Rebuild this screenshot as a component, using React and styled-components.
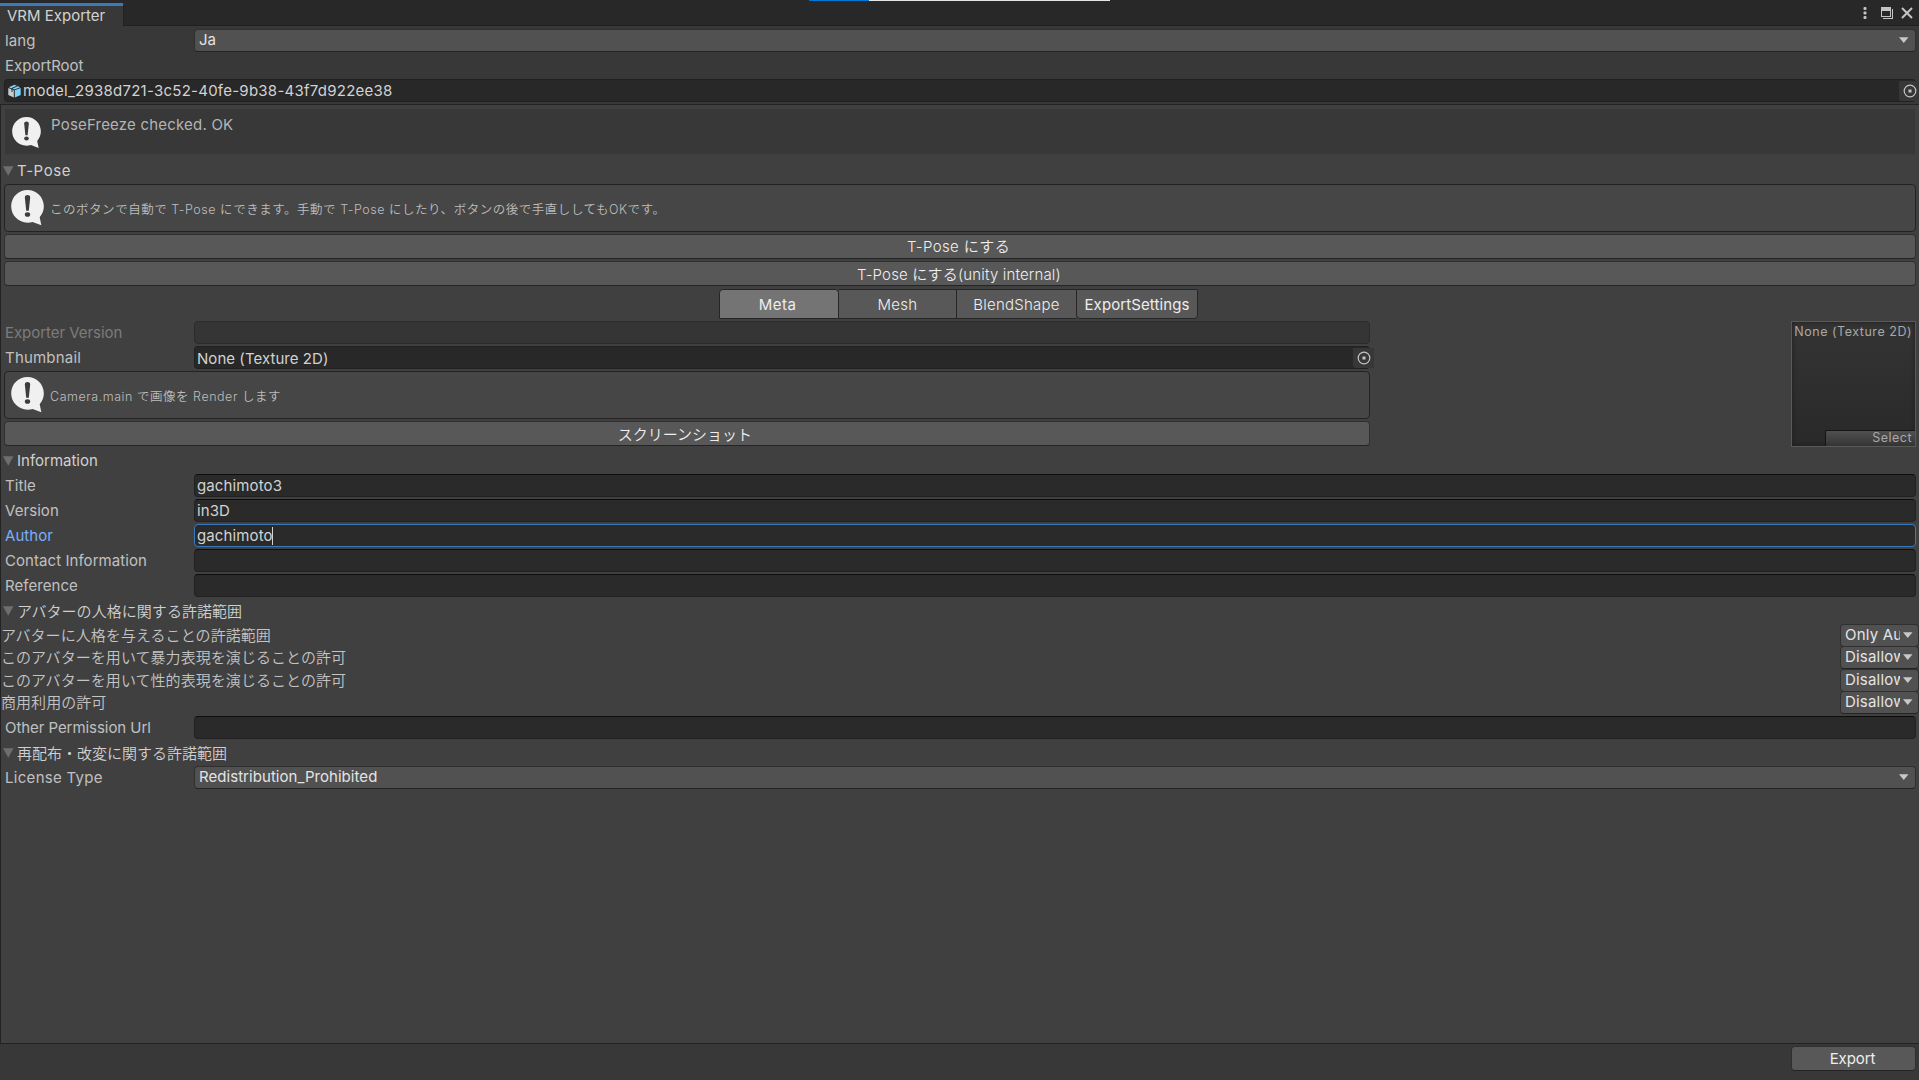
import React, { useState } from "react";
import styled, { createGlobalStyle } from "styled-components";

const GlobalStyle = createGlobalStyle`
  * {
    box-sizing: border-box;
  }
  body {
    margin: 0;
    background: #383838;
    overflow: hidden;
  }
`;

const Window = styled.div`
  display: flex;
  flex-direction: column;
  width: 1919px;
  height: 1080px;
  background: #383838;
  color: #c4c4c4;
  font-family: Inter, "Noto Sans CJK JP", sans-serif;
  font-size: 15px;
  white-space: pre;
`;
const TitleBar = styled.div`
  position: relative;
  display: flex;
  justify-content: space-between;
  align-items: flex-end;
  height: 26px;
  flex: none;
  background: #282828;
  border-bottom: 1px solid #202020;
`;
const Tab = styled.div`
  width: 124px;
  height: 23px;
  margin-bottom: -1px;
  padding-left: 7px;
  border-top: 3px solid #3a79bb;
  border-right: 1px solid #222222;
  border-radius: 0 2px 0 0;
  background: #383838;
  color: #d2d2d2;
  line-height: 20px;
`;
const WindowControls = styled.div`
  display: flex;
  height: 25px;
`;
const LoadingStrip = styled.div`
  position: absolute;
  top: 0;
  left: 809px;
  width: 301px;
  height: 1px;
  background: #e6e6e6;
`;
const LoadingBar = styled.div`
  width: 60px;
  height: 1px;
  background: #0078d7;
`;
const TopPanel = styled.div`
  display: flex;
  flex-direction: column;
  height: 78px;
  flex: none;
  padding: 3px 3px 0 4px;
`;
const MainPanel = styled.div`
  display: flex;
  flex-direction: column;
  flex: 1;
  padding: 4px 3px 0 3px;
  border: 1px solid #232323;
  border-right: none;
  background: #404040;
`;
const Footer = styled.div`
  display: flex;
  justify-content: flex-end;
  height: 36px;
  flex: none;
  padding: 2px 3px 0 0;
`;
const Row = styled.div`
  display: flex;
  height: 23px;
  flex: none;
  margin-bottom: 2px;
`;
const Label = styled.div`
  width: 190px;
  padding-left: 1px;
  flex: none;
  line-height: 23px;
  letter-spacing: ${(props) => props.$spacing || 0}px;
  color: ${(props) =>
    props.$focused ? "#7baefa" : props.$disabled ? "#7c7c7c" : "#c0c0c0"};
`;
const TextField = styled.div`
  display: flex;
  align-items: center;
  flex: 1;
  padding-left: 2px;
  border: 1px solid #212121;
  border-top-color: #0d0d0d;
  border-radius: 4px;
  background: #2a2a2a;
  color: #d2d2d2;
  line-height: 21px;
  letter-spacing: 0.12px;
  ${(props) => props.$focused && "border-color: #3a79bb;"}
  ${(props) =>
    props.$disabled && "border-color: #2b2b2b; background: #353535;"}
`;
const Caret = styled.span`
  width: 1px;
  height: 18px;
  margin-left: -1px;
  background: #d2d2d2;
`;
const ObjectField = styled(TextField)`
  border-top-color: #202020;
  background: #282828;
`;
const ObjectName = styled.span`
  flex: 1;
  padding-top: ${(props) => props.$drop || 0}px;
  letter-spacing: ${(props) => props.$spacing || 0}px;
`;
const Picker = styled.span`
  display: flex;
  align-items: center;
  justify-content: center;
  width: 21px;
  height: 20px;
  margin-right: -5px;
  border-radius: 0 0 0 3px;
  background: #373737;
`;
const Dropdown = styled.div`
  display: flex;
  align-items: center;
  flex: 1;
  height: 23px;
  padding: 0 6px 1px 4px;
  border: 1px solid #303030;
  border-bottom-color: #242424;
  border-radius: 4px;
  background: #515151;
  color: #e4e4e4;
  line-height: 20px;
  letter-spacing: 0.05px;
`;
const SmallDropdown = styled(Dropdown)`
  flex: none;
  width: 79px;
  padding-right: 5px;
  letter-spacing: 0.2px;
`;
const DropdownText = styled.span`
  flex: 1;
  margin-right: 3px;
  overflow: hidden;
`;
const Message = styled.div`
  display: flex;
  height: 45px;
  flex: none;
  margin: 0 1px 4px;
  padding: 8px 0 0 7px;
  background: #383838;
  color: #b4b4b4;
`;
const MessageText = styled.div`
  margin: -1px 0 0 10px;
  line-height: 18px;
  letter-spacing: 0.2px;
`;
const HelpBox = styled.div`
  display: flex;
  align-items: center;
  height: 48px;
  flex: none;
  margin-bottom: 2px;
  padding-left: 6px;
  border: 1px solid #232323;
  border-radius: 4px;
  background: #464646;
  color: #bdbdbd;
  font-size: 12.5px;
`;
const HelpText = styled.div`
  margin-left: 6px;
  font-weight: 350;
  letter-spacing: 0.53px;
`;
const Foldout = styled.div`
  display: flex;
  align-items: center;
  height: 23px;
  flex: none;
  margin: ${(props) => props.$margin || "0 0 2px"};
  color: #d0d0d0;
`;
const FoldoutText = styled.span`
  margin-left: 4px;
  letter-spacing: ${(props) => props.$spacing || 0}px;
  font-weight: ${(props) => (props.$light ? 350 : 400)};
`;
const Button = styled.div`
  height: 25px;
  width: ${(props) => props.$width || "auto"};
  flex: none;
  margin-bottom: 2px;
  padding-right: ${(props) => props.$shift || 2}px;
  border: 1px solid #303030;
  border-bottom-color: #242424;
  border-radius: 4px;
  background: #585858;
  color: #eeeeee;
  text-align: center;
  font-weight: ${(props) => (props.$light ? 350 : 400)};
  line-height: ${(props) => props.$line || 23}px;
  letter-spacing: ${(props) => props.$spacing || 0}px;
`;
const Toolbar = styled.div`
  display: flex;
  height: 30px;
  flex: none;
  margin: 1px 0 2px 715px;
`;
const ToolbarButton = styled.div`
  width: ${(props) => props.$width}px;
  padding-right: ${(props) => props.$shift || 0}px;
  border: 1px solid #262626;
  border-width: ${(props) => props.$borders || "1px"};
  border-radius: ${(props) => props.$radius || 0};
  background: ${(props) => (props.$active ? "#747474" : "#585858")};
  color: #eeeeee;
  text-align: center;
  line-height: 29px;
  font-weight: ${(props) => (props.$light ? 300 : 400)};
  letter-spacing: ${(props) => props.$spacing || 0}px;
`;
const MetaSection = styled.div`
  display: flex;
  justify-content: space-between;
  height: 125px;
  flex: none;
  margin-bottom: 3px;
`;
const MetaFields = styled.div`
  display: flex;
  flex-direction: column;
  width: 1366px;
`;
const Preview = styled.div`
  display: flex;
  flex-direction: column;
  justify-content: space-between;
  align-items: flex-end;
  width: 125px;
  height: 126px;
  border: 1px solid #5a5a5a;
  background: linear-gradient(#343434, #292929);
  box-shadow: inset 0 0 4px #1c1c1c;
  color: #a8a8a8;
  font-size: 12.5px;
`;
const PreviewText = styled.div`
  padding: 2px 3px 0 0;
  letter-spacing: 0.52px;
`;
const PreviewSelect = styled.div`
  width: 90px;
  height: 16px;
  padding-right: 3px;
  border-top: 1px solid #151515;
  border-left: 1px solid #151515;
  border-radius: 2px 0 0 0;
  background: linear-gradient(#505050, #343434);
  line-height: 14px;
  text-align: right;
  letter-spacing: 0.5px;
`;
const PermissionList = styled.div`
  display: flex;
  flex-direction: column;
  height: 92px;
  flex: none;
  margin: 0 -3px;
`;
const Permission = styled.div`
  display: flex;
  justify-content: space-between;
  height: 22px;
  line-height: 23px;
  &:nth-child(2) {
    height: 23px;
  }
`;
const PermissionLabel = styled.span`
  font-weight: 350;
  letter-spacing: 0.06px;
`;

const Arrow = () => (
  <svg width="10" height="6" viewBox="0 0 10 6">
    <path d="M0 0.3h9.5L4.75 6z" fill="#c8c8c8" />
  </svg>
);

const FoldIcon = styled.svg`
  margin: 0 -1px 0 -1px;
`;
const FoldArrow = () => (
  <FoldIcon width="11" height="10" viewBox="0 0 11 10">
    <path d="M0 0.3h10.5L5.25 9.8z" fill="#6e6e6e" />
  </FoldIcon>
);

const Target = () => (
  <svg width="14" height="14" viewBox="0 0 14 14">
    <circle cx="7" cy="7" r="5.8" fill="none" stroke="#c4c4c4" strokeWidth="1.2" />
    <rect x="5.5" y="5.5" width="3" height="3" fill="#c4c4c4" />
  </svg>
);

const PrefabIcon = styled.svg`
  flex: none;
  margin: 0 2px 0 1px;
`;
const Prefab = () => (
  <PrefabIcon width="13" height="14" viewBox="0 0 13 14">
    <path d="M0.3 4L5.8 6.2V13.4L0.3 11z" fill="#c9cdd0" />
    <path d="M6.8 6.2L12.7 4V11L6.8 13.4z" fill="#7fd3fa" />
    <path d="M0.8 3.2L6.5 0.8L12.2 3.2L6.5 5.4z" fill="#7fd3fa" />
    <path d="M9.6 1.8L4 4.4V8" fill="none" stroke="#282828" />
  </PrefabIcon>
);

const Bubble = ({ size }) => (
  <svg width={size} height={size * 1.08} viewBox="0 0 33 36">
    <path
      d="M16.5 0C25.6 0 33 7.2 33 16.5c0 4.5-1.6 8-4.2 11L30.5 35.6L21.6 32.3C20 32.8 18.3 33 16.5 33C7.4 33 0 25.8 0 16.5S7.4 0 16.5 0z"
      fill="#f0f0f0"
    />
    <path d="M13.8 7.5C13.8 4.4 19.2 4.4 19.2 7.5L17.8 21H15.2z" fill="#3c3c3c" />
    <ellipse cx="16.5" cy="24.7" rx="2.7" ry="2.3" fill="#3c3c3c" />
  </svg>
);

const permissions = [
  { label: "アバターに人格を与えることの許諾範囲", value: "Only Au" },
  { label: "このアバターを用いて暴力表現を演じることの許可", value: "Disallow" },
  { label: "このアバターを用いて性的表現を演じることの許可", value: "Disallow" },
  { label: "商用利用の許可", value: "Disallow" },
];

const information = [
  { label: "Title", value: "gachimoto3" },
  { label: "Version", value: "in3D" },
  { label: "Author", value: "gachimoto" },
  { label: "Contact Information", value: "" },
  { label: "Reference", value: "" },
];

function App() {
  const [focused] = useState("Author");

  return (
    <Window>
      <GlobalStyle />
      <TitleBar>
        <Tab>VRM Exporter</Tab>
        <LoadingStrip>
          <LoadingBar />
        </LoadingStrip>
        <WindowControls>
          <svg width="58" height="25" viewBox="0 0 58 25">
            <g fill="#c4c4c4">
              <rect x="2.5" y="7" width="3" height="3" rx="1" />
              <rect x="2.5" y="11.5" width="3" height="3" rx="1" />
              <rect x="2.5" y="16" width="3" height="3" rx="1" />
              <path d="M20 7h10v10H20zM21 11v5h8v-5zM31 9h1v10H22v-1h9z" fillRule="evenodd" />
            </g>
            <path d="M41 8l10 10M51 8l-10 10" stroke="#c4c4c4" strokeWidth="2" />
          </svg>
        </WindowControls>
      </TitleBar>
      <TopPanel>
        <Row>
          <Label $spacing={0.1}>lang</Label>
          <Dropdown>
            <DropdownText>Ja</DropdownText>
            <Arrow />
          </Dropdown>
        </Row>
        <Row>
          <Label>ExportRoot</Label>
        </Row>
        <Row>
          <ObjectField>
            <Prefab />
            <ObjectName $spacing={0.25}>
              model_2938d721-3c52-40fe-9b38-43f7d922ee38
            </ObjectName>
            <Picker>
              <Target />
            </Picker>
          </ObjectField>
        </Row>
      </TopPanel>
      <MainPanel>
        <Message>
          <Bubble size={29} />
          <MessageText>PoseFreeze checked. OK</MessageText>
        </Message>
        <Foldout $margin="1px 0 2px">
          <FoldArrow />
          <FoldoutText $spacing={0.55}>T-Pose</FoldoutText>
        </Foldout>
        <HelpBox>
          <Bubble size={33} />
          <HelpText>
            このボタンで自動で T-Pose にできます。手動で T-Pose にしたり、ボタンの後で手直ししてもOKです。
          </HelpText>
        </HelpBox>
        <Button $light $spacing={0.38} $shift={3}>T-Pose にする</Button>
        <Button $light $spacing={0.16} $line={25}>T-Pose にする(unity internal)</Button>
        <Toolbar>
          <ToolbarButton $active $width={120} $shift={3} $radius="4px 4px 0 0" $spacing={0.5}>
            Meta
          </ToolbarButton>
          <ToolbarButton $light $width={118} $borders="1px 1px 1px 0" $spacing={0.3}>
            Mesh
          </ToolbarButton>
          <ToolbarButton $light $width={119} $borders="1px 0" $spacing={0.25}>
            BlendShape
          </ToolbarButton>
          <ToolbarButton $width={122} $radius="0 0 4px 4px" $spacing={0.1}>
            ExportSettings
          </ToolbarButton>
        </Toolbar>
        <MetaSection>
          <MetaFields>
            <Row>
              <Label $disabled $spacing={-0.05}>Exporter Version</Label>
              <TextField $disabled />
            </Row>
            <Row>
              <Label $spacing={0.2}>Thumbnail</Label>
              <ObjectField>
                <ObjectName $spacing={0.05} $drop={2}>None (Texture 2D)</ObjectName>
                <Picker>
                  <Target />
                </Picker>
              </ObjectField>
            </Row>
            <HelpBox>
              <Bubble size={33} />
              <HelpText>Camera.main で画像を Render します</HelpText>
            </HelpBox>
            <Button $light $shift={4} $line={25}>スクリーンショット</Button>
          </MetaFields>
          <Preview>
            <PreviewText>None (Texture 2D)</PreviewText>
            <PreviewSelect>Select</PreviewSelect>
          </Preview>
        </MetaSection>
        <Foldout>
          <FoldArrow />
          <FoldoutText>Information</FoldoutText>
        </Foldout>
        {information.map((item) => (
          <Row key={item.label}>
            <Label $focused={item.label === focused} $spacing={0.06}>
              {item.label}
            </Label>
            <TextField $focused={item.label === focused}>
              {item.value}
              {item.label === focused && <Caret />}
            </TextField>
          </Row>
        ))}
        <Foldout>
          <FoldArrow />
          <FoldoutText $light $spacing={0.05}>アバターの人格に関する許諾範囲</FoldoutText>
        </Foldout>
        <PermissionList>
          {permissions.map((item) => (
            <Permission key={item.label}>
              <PermissionLabel>{item.label}</PermissionLabel>
              <SmallDropdown>
                <DropdownText>{item.value}</DropdownText>
                <Arrow />
              </SmallDropdown>
            </Permission>
          ))}
        </PermissionList>
        <Row>
          <Label $spacing={-0.06}>Other Permission Url</Label>
          <TextField />
        </Row>
        <Foldout>
          <FoldArrow />
          <FoldoutText $light>再配布・改変に関する許諾範囲</FoldoutText>
        </Foldout>
        <Row>
          <Label $spacing={0.3}>License Type</Label>
          <Dropdown>
            <DropdownText>Redistribution_Prohibited</DropdownText>
            <Arrow />
          </Dropdown>
        </Row>
      </MainPanel>
      <Footer>
        <Button $width="125px" $shift={2} $spacing={-0.1}>Export</Button>
      </Footer>
    </Window>
  );
}

export default App;
